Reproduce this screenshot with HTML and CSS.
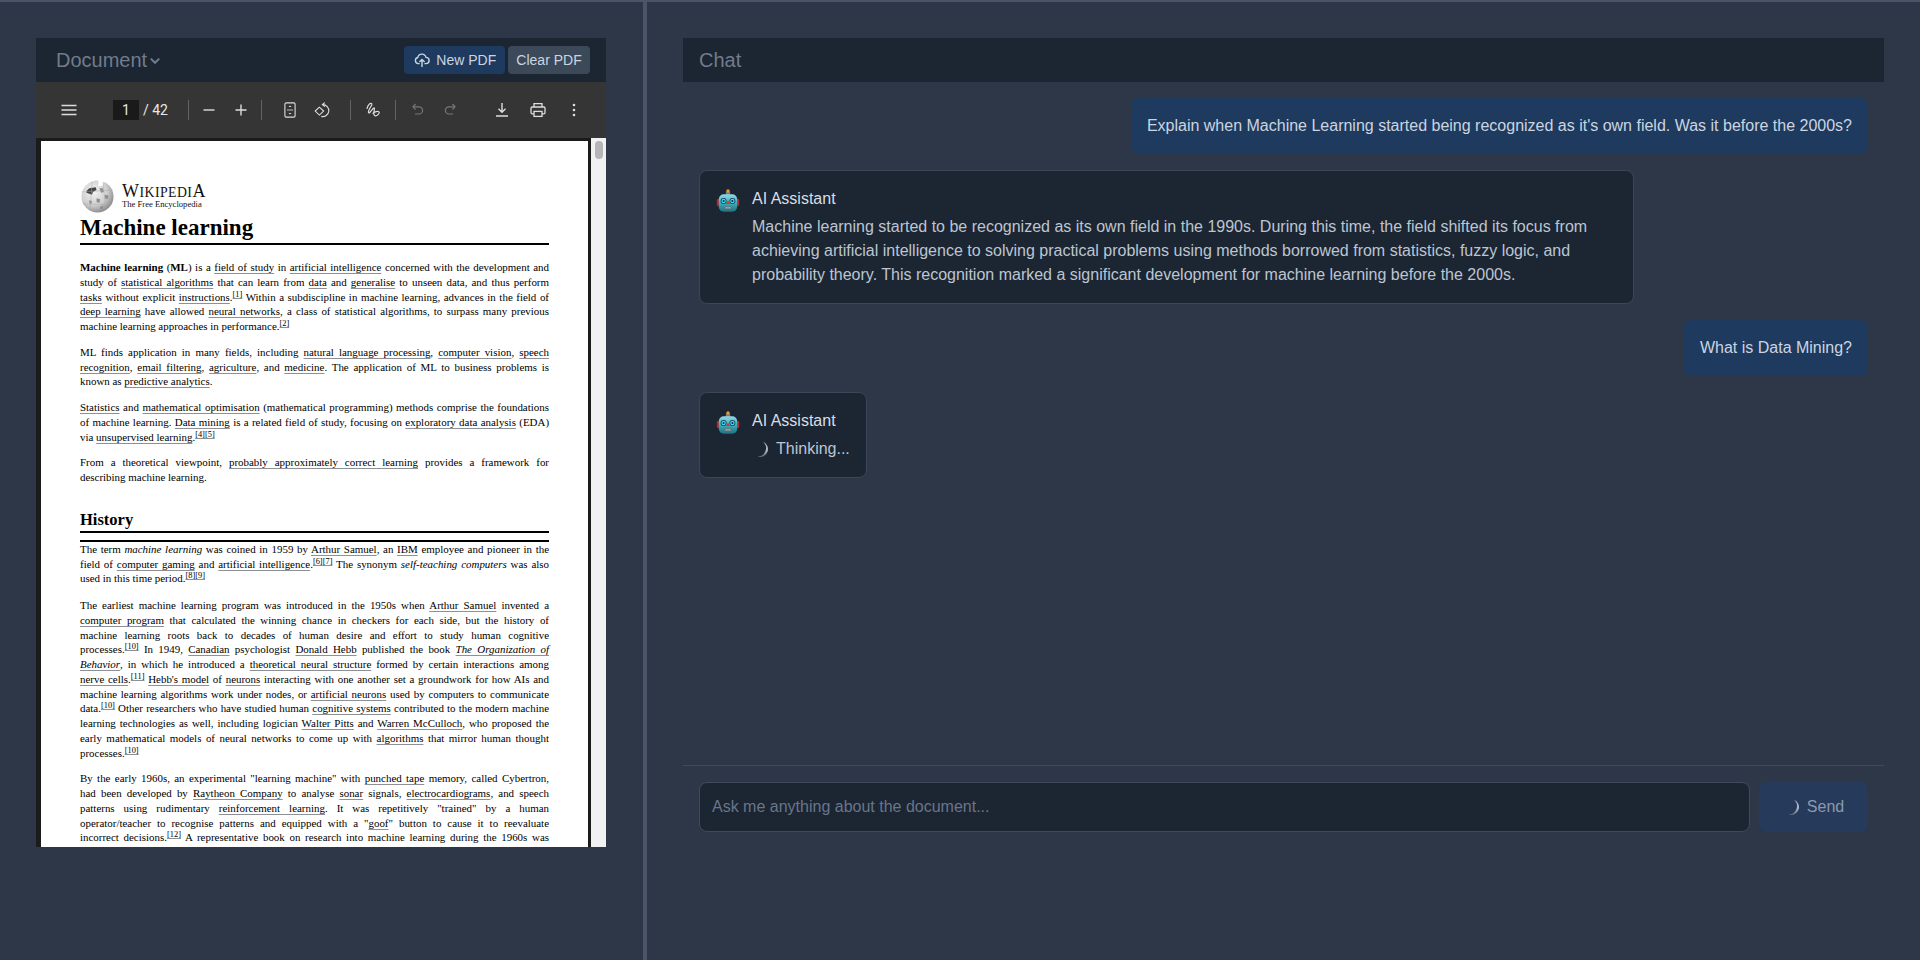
FILE: index.html
```html
<!DOCTYPE html>
<html lang="en">
<head>
<meta charset="utf-8">
<title>Chat with PDF</title>
<link rel="stylesheet" href="styles.css">
</head>
<body>
<div class="topline"></div>
<div class="app">
  <section class="left">
    <div class="doc">
      <header class="bar doc-bar">
        <div class="title">Document<svg class="chev" viewBox="0 0 10 10"><path d="M1.5 3 5 6.5 8.5 3" fill="none" stroke="currentColor" stroke-width="1.7"/></svg></div>
        <div class="actions">
          <button class="btn btn-blue"><svg class="cloud" viewBox="0 0 16 16" fill="none" stroke="currentColor" stroke-width="1.4"><path d="M5.6 11.6H4.2A3.1 3.1 0 0 1 3.8 5.5 4.2 4.2 0 0 1 12 5.4a3.1 3.1 0 0 1 0 6.2h-1.6"/><path d="M8 15V7.5M5.4 10 8 7.4l2.6 2.6"/></svg>New PDF</button>
          <button class="btn btn-gray">Clear PDF</button>
        </div>
      </header>
      <div class="toolbar">
        <span class="tb"><svg viewBox="0 0 16 16" stroke="#ddd" stroke-width="1.4"><path d="M0.5 3.5h15M0.5 8h15M0.5 12.5h15"/></svg></span>
        <span class="pageinput">1</span>
        <span class="pagecount">/ 42</span>
        <i class="sep s1"></i>
        <span class="tb"><svg viewBox="0 0 16 16" stroke="#ddd" stroke-width="1.4"><path d="M2.5 8h11"/></svg></span>
        <span class="tb"><svg viewBox="0 0 16 16" stroke="#ddd" stroke-width="1.4"><path d="M2.5 8h11M8 2.5v11"/></svg></span>
        <i class="sep s2"></i>
        <span class="tb g1"><svg viewBox="0 0 16 16" fill="none" stroke="#ddd" stroke-width="1.1"><rect x="2.9" y="0.9" width="10.2" height="14.2" rx="1.3"/><path d="M6.5 5 8 3.5 9.5 5zM6.5 11 8 12.5 9.5 11z" fill="#ddd" stroke="none"/><path d="M5 8h6" stroke-width=".8"/></svg></span>
        <span class="tb"><svg viewBox="0 0 16 16" fill="none" stroke="#ddd" stroke-width="1.1"><path d="M8.6 2.6A6 6 0 1 1 7.3 14.4"/><path d="M10.8 .6 8.4 2.6l2.4 2"/><path d="M5.4 5.2 1.2 9.1l4.2 4 4.2-4z"/></svg></span>
        <i class="sep s3"></i>
        <span class="tb"><svg viewBox="0 0 16 16" fill="none" stroke="#ddd" stroke-width="1.2" stroke-linecap="round"><path d="M2 6.5C3 3 5 .8 6.5 1.5 8.5 2.5 2.5 8 3.5 10.5 4.4 12.5 7.5 6 9 5.8 10.5 5.8 7.5 11.5 9.5 13.5c1.2 1 4.5-1 4.7-2.8.2-1.8-3-1.8-6.2.6"/></svg></span>
        <i class="sep s4"></i>
        <span class="tb g2"><svg viewBox="0 0 16 16" fill="none" stroke="#777" stroke-width="1.2"><path d="M5.5 2 3 4.8l2.5 2.7"/><path d="M3 4.8h6a3.6 3.6 0 0 1 0 7.2H5"/></svg></span>
        <span class="tb"><svg viewBox="0 0 16 16" fill="none" stroke="#777" stroke-width="1.2"><path d="M10.5 2 13 4.8l-2.5 2.7"/><path d="M13 4.8H7A3.6 3.6 0 0 0 7 12h4"/></svg></span>
        <span class="tb g3"><svg viewBox="0 0 16 16" fill="none" stroke="#ddd" stroke-width="1.4"><path d="M8 1v9M4.5 6.8 8 10.3l3.5-3.5M2 14h12"/></svg></span>
        <span class="tb g4"><svg viewBox="0 0 16 16" fill="none" stroke="#ddd" stroke-width="1.3"><path d="M4 5V1.7h8V5"/><rect x="1" y="5" width="14" height="6.8" rx="1.2"/><rect x="4" y="9.4" width="8" height="5" fill="#353535"/></svg></span>
        <span class="tb g5"><svg viewBox="0 0 16 16" fill="#ddd"><circle cx="8" cy="3" r="1.3"/><circle cx="8" cy="8" r="1.3"/><circle cx="8" cy="13" r="1.3"/></svg></span>
      </div>
      <div class="viewer">
        <div class="page">
          <div class="wiki">
            <svg class="globe" viewBox="0 0 36 36">
              <defs><radialGradient id="g" cx="38%" cy="35%" r="70%"><stop offset="0" stop-color="#f4f4f4"/><stop offset=".6" stop-color="#cfcfcf"/><stop offset="1" stop-color="#858585"/></radialGradient></defs>
              <circle cx="18" cy="18" r="17.5" fill="url(#g)"/>
              <path d="M19 0h6l-1 6-5 1z" fill="#fff"/>
              <path d="M6 12l3-3 7-1 1 3-4 2-1 3-3-1-3-1z" fill="#454545"/>
              <path d="M20 9h4l1 4-3 1zM9 22l3 1-1 4-2-2zM17 20l4 1-1 4-3-1zM26 16l4 1-1 4-3-1zM21 29l3-1v3l-3 1z" fill="#8f8f8f"/>
              <path d="M12 2 10 34M24 2l3 31M1 13l34-2M2 26l32 1" stroke="#aaa" stroke-width=".5" fill="none"/>
            </svg>
            <div class="wordmark">
              <div class="wm-top">W<small>IKIPEDI</small>A</div>
              <div class="wm-sub">The Free Encyclopedia</div>
            </div>
          </div>
          <h1 class="h1">Machine learning</h1>
          <div class="p">
            <span class="ln"><b>Machine learning</b> (<b>ML</b>) is a <a>field of study</a> in <a>artificial intelligence</a> concerned with the development and</span>
            <span class="ln">study of <a>statistical algorithms</a> that can learn from <a>data</a> and <a>generalise</a> to unseen data, and thus perform</span>
            <span class="ln"><a>tasks</a> without explicit <a>instructions</a>.<sup>[1]</sup> Within a subdiscipline in machine learning, advances in the field of</span>
            <span class="ln"><a>deep learning</a> have allowed <a>neural networks</a>, a class of statistical algorithms, to surpass many previous</span>
            <span class="ln end">machine learning approaches in performance.<sup>[2]</sup></span>
          </div>
          <div class="p">
            <span class="ln">ML finds application in many fields, including <a>natural language processing</a>, <a>computer vision</a>, <a>speech</a></span>
            <span class="ln"><a>recognition</a>, <a>email filtering</a>, <a>agriculture</a>, and <a>medicine</a>. The application of ML to business problems is</span>
            <span class="ln end">known as <a>predictive analytics</a>.</span>
          </div>
          <div class="p">
            <span class="ln"><a>Statistics</a> and <a>mathematical optimisation</a> (mathematical programming) methods comprise the foundations</span>
            <span class="ln">of machine learning. <a>Data mining</a> is a related field of study, focusing on <a>exploratory data analysis</a> (EDA)</span>
            <span class="ln end">via <a>unsupervised learning</a>.<sup>[4][5]</sup></span>
          </div>
          <div class="p">
            <span class="ln">From a theoretical viewpoint, <a>probably approximately correct learning</a> provides a framework for</span>
            <span class="ln end">describing machine learning.</span>
          </div>
          <h2 class="h2">History</h2>
          <div class="p">
            <span class="ln">The term <i>machine learning</i> was coined in 1959 by <a>Arthur Samuel</a>, an <a>IBM</a> employee and pioneer in the</span>
            <span class="ln">field of <a>computer gaming</a> and <a>artificial intelligence</a>.<sup>[6][7]</sup> The synonym <i>self-teaching computers</i> was also</span>
            <span class="ln end">used in this time period.<sup>[8][9]</sup></span>
          </div>
          <div class="p">
            <span class="ln">The earliest machine learning program was introduced in the 1950s when <a>Arthur Samuel</a> invented a</span>
            <span class="ln"><a>computer program</a> that calculated the winning chance in checkers for each side, but the history of</span>
            <span class="ln">machine learning roots back to decades of human desire and effort to study human cognitive</span>
            <span class="ln">processes.<sup>[10]</sup> In 1949, <a>Canadian</a> psychologist <a>Donald Hebb</a> published the book <a><i>The Organization of</i></a></span>
            <span class="ln"><a><i>Behavior</i></a>, in which he introduced a <a>theoretical neural structure</a> formed by certain interactions among</span>
            <span class="ln"><a>nerve cells</a>.<sup>[11]</sup> <a>Hebb's model</a> of <a>neurons</a> interacting with one another set a groundwork for how AIs and</span>
            <span class="ln">machine learning algorithms work under nodes, or <a>artificial neurons</a> used by computers to communicate</span>
            <span class="ln">data.<sup>[10]</sup> Other researchers who have studied human <a>cognitive systems</a> contributed to the modern machine</span>
            <span class="ln">learning technologies as well, including logician <a>Walter Pitts</a> and <a>Warren McCulloch</a>, who proposed the</span>
            <span class="ln">early mathematical models of neural networks to come up with <a>algorithms</a> that mirror human thought</span>
            <span class="ln end">processes.<sup>[10]</sup></span>
          </div>
          <div class="p">
            <span class="ln">By the early 1960s, an experimental "learning machine" with <a>punched tape</a> memory, called Cybertron,</span>
            <span class="ln">had been developed by <a>Raytheon Company</a> to analyse <a>sonar</a> signals, <a>electrocardiograms</a>, and speech</span>
            <span class="ln">patterns using rudimentary <a>reinforcement learning</a>. It was repetitively "trained" by a human</span>
            <span class="ln">operator/teacher to recognise patterns and equipped with a "<a>goof</a>" button to cause it to reevaluate</span>
            <span class="ln">incorrect decisions.<sup>[12]</sup> A representative book on research into machine learning during the 1960s was</span>
            <span class="ln right"><sup>[13]</sup></span>
          </div>
        </div>
        <div class="scrollbar"><div class="thumb"></div></div>
      </div>
    </div>
  </section>
  <div class="divider"></div>
  <section class="right">
    <header class="bar chat-bar"><div class="title">Chat</div></header>
    <div class="messages">
      <div class="msg user">Explain when Machine Learning started being recognized as it's own field. Was it before the 2000s?</div>
      <div class="msg bot">
        <svg class="robot" viewBox="0 0 24 24"><use href="#robot-art"/></svg>
        <div class="bot-body">
          <div class="name">AI Assistant</div>
          <div class="answer">Machine learning started to be recognized as its own field in the 1990s. During this time, the field shifted its focus from achieving artificial intelligence to solving practical problems using methods borrowed from statistics, fuzzy logic, and probability theory. This recognition marked a significant development for machine learning before the 2000s.</div>
        </div>
      </div>
      <div class="msg user">What is Data Mining?</div>
      <div class="msg bot">
        <svg class="robot" viewBox="0 0 24 24"><use href="#robot-art"/></svg>
        <div class="bot-body">
          <div class="name">AI Assistant</div>
          <div class="answer thinking"><svg class="spinner" viewBox="0 0 16 16"><path d="M10.5.4A8 8 0 0 1 5.5 15.6 8.4 8.4 0 0 0 10.5.4z" fill="url(#fade)"/></svg>Thinking...</div>
        </div>
      </div>
    </div>
    <footer class="composer">
      <div class="input">Ask me anything about the document...</div>
      <button class="send"><svg class="spinner" viewBox="0 0 16 16"><path d="M10.5.4A8 8 0 0 1 5.5 15.6 8.4 8.4 0 0 0 10.5.4z" fill="url(#fade)"/></svg>Send</button>
    </footer>
  </section>
</div>
<svg class="defs" aria-hidden="true">
  <defs>
    <linearGradient id="fade" x1="0" y1="0" x2="0" y2="1"><stop offset="0" stop-color="#aab4c2"/><stop offset=".6" stop-color="#aab4c2"/><stop offset="1" stop-color="#5d6777"/></linearGradient>
    <linearGradient id="head" x1="0" y1="0" x2="0" y2="1"><stop offset="0" stop-color="#8fdbe6"/><stop offset=".55" stop-color="#3fa7b4"/><stop offset="1" stop-color="#1d6f80"/></linearGradient>
    <g id="robot-art">
      <rect x="0.8" y="10" width="3" height="7" rx="1.2" fill="#b3282c"/>
      <rect x="20.2" y="10" width="3" height="7" rx="1.2" fill="#b3282c"/>
      <rect x="9.8" y="2.6" width="4.4" height="4" fill="#6f7f88"/>
      <circle cx="12" cy="2" r="1.7" fill="#f39a1e"/>
      <rect x="2.8" y="5.2" width="18.4" height="17.6" rx="5" fill="url(#head)"/>
      <circle cx="7.6" cy="12" r="3" fill="#0f3d55"/>
      <circle cx="16.4" cy="12" r="3" fill="#0f3d55"/>
      <circle cx="7.6" cy="12" r="2.2" fill="#35e0f5"/>
      <circle cx="16.4" cy="12" r="2.2" fill="#35e0f5"/>
      <circle cx="7.6" cy="12" r="1" fill="#124"/>
      <circle cx="16.4" cy="12" r="1" fill="#124"/>
      <path d="M12 11.5 14 15H10z" fill="#d9342f"/>
      <rect x="8" y="17.3" width="8" height="2.8" rx="1" fill="#5f7a80"/>
      <path d="M9.8 18h.8v1.4h-.8zM11.6 18h.8v1.4h-.8zM13.4 18h.8v1.4h-.8z" fill="#c5d4d6"/>
    </g>
  </defs>
</svg>
</body>
</html>
```
FILE: styles.css
```css
* { box-sizing: border-box; }
html, body { margin: 0; height: 100%; }
body {
  background: #2d3748;
  font-family: "Liberation Sans", Arial, sans-serif;
  color: #cbd5e0;
  overflow: hidden;
}
.defs { width: 0; height: 0; display: block; overflow: hidden; }
.topline { height: 2px; background: #4a5568; }
.app { display: flex; height: 958px; }
.left { width: 643px; padding: 36px 37px 0 36px; flex: none; }
.divider { width: 4px; background: #4a5568; flex: none; }
.right {
  flex: 1;
  padding: 36px 36px 128px 36px;
  display: flex;
  flex-direction: column;
}
.doc { display: flex; flex-direction: column; height: 809px; }
.bar {
  height: 44px;
  flex: none;
  background: #1c2532;
  display: flex;
  align-items: center;
  justify-content: space-between;
}
.doc-bar { padding: 0 16px 0 20px; }
.chat-bar { padding: 0 16px; }
.title {
  font-size: 20px;
  color: #707c8c;
  display: flex;
  align-items: center;
}
.chev { width: 12px; height: 12px; margin-left: 2px; margin-top: 2px; }
.actions { display: flex; gap: 3.5px; }
.btn {
  height: 28px;
  padding: 0 8.3px;
  border: 0;
  border-radius: 4px;
  font: 14px "Liberation Sans", Arial, sans-serif;
  color: #cbd5e0;
  display: flex;
  align-items: center;
}
.btn-blue { background: #1e3a5f; }
.btn-gray { background: #3c4958; }
.cloud { width: 16px; height: 16px; margin-left: 2px; margin-right: 6px; }

.toolbar {
  height: 56px;
  flex: none;
  background: #353535;
  display: flex;
  align-items: center;
  padding-left: 16.5px;
  font-family: Roboto, "Liberation Sans", sans-serif;
  font-size: 14px;
  color: #e8e8e8;
}
.tb { width: 32px; height: 32px; flex: none; display: flex; align-items: center; justify-content: center; }
.tb svg { width: 16px; height: 16px; }
.pageinput {
  width: 26px; height: 20px; margin-left: 28.5px;
  background: #1a1a1a;
  display: flex; align-items: center; justify-content: center;
}
.pagecount { margin-left: 4px; width: 26px; }
.sep { width: 1px; height: 20px; background: #636363; flex: none; }
.s1 { margin-left: 19px; margin-right: 4px; }
.s2 { margin-left: 4px; margin-right: 12px; }
.s3 { margin-left: 12px; margin-right: 6px; }
.s4 { margin-left: 5.5px; margin-right: 6.5px; }
.g3 { margin-left: 20px; }
.g4 { margin-left: 4px; }
.g5 { margin-left: 4px; }

.viewer {
  flex: 1;
  min-height: 0;
  position: relative;
  background: #1b1b1b;
  padding: 3px 18px 0 5px;
  overflow: hidden;
}
.page {
  background: #fff;
  height: 100%;
  padding: 39px 39px 0 39px;
  color: #000;
  font-family: "Liberation Serif", "Times New Roman", serif;
  font-size: 10.95px;
  line-height: 14.75px;
  overflow: hidden;
}
.scrollbar { position: absolute; right: 0; top: 0; bottom: 0; width: 15px; background: #f1f1f1; }
.thumb { position: absolute; left: 4px; top: 3px; width: 8px; height: 18px; border-radius: 4px; background: #b5b5b5; }

.wiki { display: flex; height: 32px; }
.globe { width: 35px; height: 33px; flex: none; }
.wordmark { margin-left: 7px; font-family: "Liberation Serif", serif; color: #111; }
.wm-top { font-size: 18px; line-height: 16px; letter-spacing: .45px; margin-top: 3px; }
.wm-top small { font-size: 13.8px; }
.wm-sub { font-size: 8.6px; line-height: 9px; margin-top: -1px; margin-left: 0; }
.h1 {
  font-size: 23px;
  line-height: 27px;
  margin: 2px 0 15px;
  padding-bottom: 2px;
  border-bottom: 2px solid #000;
  font-weight: bold;
}
.h2 {
  font-size: 16.5px;
  line-height: 20px;
  margin: 25.2px 0 4px;
  font-weight: bold;
  height: 28px;
  position: relative;
}
.h2::after {
  content: "";
  position: absolute;
  left: 0; right: 0; top: 21px;
  height: 7px;
  border-top: 2px solid #000;
  border-bottom: 2px solid #000;
}
.p { margin: 0 0 11px; }
.h2 + .p { margin-bottom: 12px; }
.ln {
  display: block;
  height: 14.75px;
  text-align: justify;
  text-align-last: justify;
}
.ln.end { text-align-last: left; }
.ln.right { text-align-last: right; }
.ln a {
  text-decoration: underline;
  text-decoration-color: #8d9097;
  text-decoration-thickness: 1px;
  text-decoration-skip-ink: none;
  text-underline-offset: 2px;
}
.ln sup {
  font-size: 8.4px;
  line-height: 0;
  vertical-align: 4px;
  text-decoration: underline;
  text-decoration-color: #8d9097;
  text-decoration-thickness: 1px;
  text-decoration-skip-ink: none;
  text-underline-offset: 1px;
}

.messages {
  flex: 1;
  min-height: 0;
  padding: 16px;
  display: flex;
  flex-direction: column;
  gap: 16px;
  align-items: flex-start;
}
.msg { font-size: 16px; line-height: 24px; border-radius: 8px; }
.user {
  align-self: flex-end;
  background: #1e3a5f;
  padding: 16px;
  color: #cbd5e0;
}
.bot {
  background: #1c2532;
  border: 1px solid #3b4658;
  padding: 16px;
  display: flex;
  gap: 12px;
  max-width: 935px;
}
.robot { width: 24px; height: 24px; flex: none; margin-top: 2px; }
.name { color: #d8dee6; margin-bottom: 4px; }
.answer { color: #bcc5d1; }
.thinking { display: flex; align-items: center; }
.spinner { display: block; width: 16px; height: 16px; margin-right: 8px; flex: none; }
.composer {
  flex: none;
  border-top: 1px solid #3f4a5c;
  padding: 16px 16px 0 16px;
  display: flex;
  gap: 9px;
}
.input {
  flex: 1;
  height: 50px;
  background: #1c2532;
  border: 1px solid #3f4a5c;
  border-radius: 8px;
  padding: 0 12px;
  font-size: 16px;
  line-height: 48px;
  color: #68758a;
}
.send {
  width: 109px;
  height: 50px;
  border: 0;
  border-radius: 8px;
  background: #263a5c;
  color: #8d99ab;
  font: 16px "Liberation Sans", Arial, sans-serif;
  display: flex;
  align-items: center;
  justify-content: center;
}
```
